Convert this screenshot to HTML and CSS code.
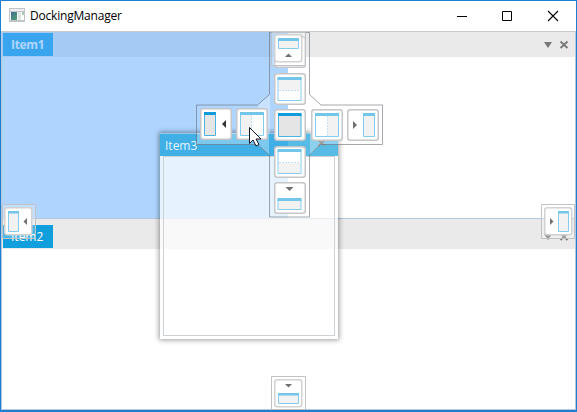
FILE: index.html
```html
<!DOCTYPE html>
<html lang="en">
<head>
<meta charset="utf-8">
<title>DockingManager</title>
<link rel="stylesheet" href="styles.css">
</head>
<body>
<div class="window">
  <header class="titlebar">
    <svg class="app-icon" width="16" height="14" viewBox="0 0 16 14"><defs><linearGradient id="g" x2="1" y2="1"><stop offset="0" stop-color="#3c6c9c"/><stop offset="1" stop-color="#4fa36c"/></linearGradient></defs><path fill="#c2c5c8" d="M0 0h16v14H0z"/><path fill="#eceef0" d="M1 1h14v2H1z"/><path fill="#fff" d="M1 4h14v8H1z"/><path fill="url(#g)" d="M2 4h6v8H2z"/><path fill="#dce8e2" d="M9 4h3v8H9z"/><path fill="#a8cbb8" d="M13 4h2v3h-2z"/></svg>
    <h1 class="title">DockingManager</h1>
    <svg class="captions" width="102" height="12" viewBox="0 0 102 12" fill="none" stroke="#000"><path d="M0 6.500h10M45.500 1.500h9v9h-9z"/><path d="M91 1l10 10M101 1L91 11" stroke-width="1.1"/></svg>
  </header>
  <section class="pane">
    <div class="pane-head"><span class="tab tab-bold">Item1</span>
      <svg class="tools" width="25" height="10" viewBox="0 0 25 10"><path fill="#777" d="M0 2h8L4 8z"/><path d="M16.500 1.500l7 6.500M23.500 1.500L16.500 8" stroke="#777" stroke-width="1.800"/></svg></div>
    <div class="pane-body"></div>
  </section>
  <section class="pane pane-lower">
    <div class="pane-head"><span class="tab">Item2</span>
      <svg class="tools" width="25" height="10" viewBox="0 0 25 10"><path fill="#777" d="M0 2h8L4 8z"/><path d="M16.500 1.500l7 6.500M23.500 1.500L16.500 8" stroke="#777" stroke-width="1.800"/></svg></div>
    <div class="pane-body"></div>
  </section>
</div>
<div class="preview"></div>
<div class="floating">
  <div class="float-head"><span>Item3</span></div>
  <div class="float-body"></div>
</div>
<svg class="guides" width="577" height="412" viewBox="0 0 577 412">
  <defs>
    <g id="btn"><rect x=".75" y=".75" width="30.500" height="30.500" rx="2.500" fill="#fff" stroke="#c6c6c8" stroke-width="1.500"/></g>
    <g id="small"><rect x=".75" y=".75" width="27" height="27" rx="2.500" fill="#fff" stroke="#d2d2d2" stroke-width="1.500"/></g>
  </defs>
  <!-- compass plate -->
  <path class="wedge" d="M270 94.500L258 105v28h12zM309 94.500l12 10.500v28h-12zM197 133h72v22l-12-10.500h-60zM310 133h72v11.500h-61L310 155z"/>
  <path d="M318 140l7 6m0-6l-7 6" stroke="#a89488" stroke-width="1.300"/>
  <path class="outline" d="M269.500 32.500h40v62l11.500 10.500h61.500v39.500H320.500l-11 10.500v62h-40v-62l-12-10.500h-61v-39.500h61l12-10.500z"/>
  <!-- left arm -->
  <use href="#btn" x="200" y="108"/>
  <path class="strong" d="M204.500 113h11v22.500h-11z"/><path class="strong-bar" d="M204 112h12v3h-12z"/><path fill="#333" d="M226 120v8l-4-4z"/>
  <use href="#btn" x="236" y="108"/>
  <path class="soft" d="M240.500 113h23v22.500h-23z"/><path class="half" d="M241 115h11v20h-11z"/><path class="soft-bar" d="M240 112h24v3h-24z"/><path class="dash" d="M251.500 115v20"/>
  <!-- center -->
  <use href="#btn" x="274" y="109"/>
  <path class="strong" d="M278.500 114h22.500v22.500h-22.500z"/><path class="strong-bar" d="M278 113h23.500v3H278z"/>
  <!-- right arm -->
  <use href="#btn" x="311" y="109"/>
  <path class="soft" d="M315.500 114h23v22.500h-23z"/><path class="half" d="M328 116h10v20h-10z"/><path class="soft-bar" d="M315 113h24v3h-24z"/><path class="dash" d="M327.500 116v20"/>
  <use href="#btn" x="347" y="109"/>
  <path class="soft half" d="M363.500 114h11v22.500h-11z"/><path class="soft-bar" d="M363 113h12v3h-12z"/><path class="arrow" d="M353 121v8l4-4z"/>
  <!-- upper arm -->
  <use href="#btn" x="274" y="36"/>
  <use href="#btn" x="274" y="73"/>
  <path class="soft" d="M278 77.500h23v23h-23z"/><path class="half" d="M279 80h21v10h-21z"/><path class="soft-bar" d="M277.500 77h24v3h-24z"/><path class="dash" d="M279 90.500h21"/>
  <!-- lower arm -->
  <use href="#btn" x="274" y="146"/>
  <path class="soft" d="M278 150.500h23v23h-23z"/><path class="half" d="M279 163h21v10h-21z"/><path class="soft-bar" d="M277.500 149h24v3h-24z"/><path class="dash" d="M279 162.500h21"/>
  <use href="#btn" x="274" y="182"/>
  <path class="soft half" d="M278 199.500h23v10h-23z"/><path class="soft-bar" d="M277.500 198h24v3h-24z"/><path class="arrow" d="M285.500 187h8l-4 4z"/>
  <!-- window edge guides -->
  <path class="plate" d="M271.500 32.500h34v33h-34z"/>
  <use href="#small" x="274" y="34"/>
  <path class="soft half" d="M278.500 39.500h20v9h-20z"/><path class="soft-bar" d="M278 38h21v3h-21z"/><path class="arrow" d="M285 57h7l-3.500-3.500z"/>
  <path class="plate" d="M2.500 204.500h33v34h-33z"/>
  <use href="#small" x="4" y="207"/>
  <path class="soft half" d="M8.500 212.500h10v19h-10z"/><path class="soft-bar" d="M8 211h11v2.500H8z"/><path class="arrow" d="M27 218v7l-3.500-3.500z"/>
  <path class="plate" d="M541.500 204.500h33v34h-33z"/>
  <use href="#small" x="544" y="207"/>
  <path class="soft half" d="M558.500 212.500h10v19h-10z"/><path class="soft-bar" d="M558 211h11v2.500h-11z"/><path class="arrow" d="M550 218v7l3.500-3.500z"/>
  <path class="plate" d="M271.500 376.500h34v33h-34z"/>
  <use href="#small" x="274" y="379"/>
  <path class="soft half" d="M278.500 394.500h20v9h-20z"/><path class="soft-bar" d="M278 393h21v2.500h-21z"/><path class="arrow" d="M285 384h7l-3.500 3.500z"/>
  <!-- pointer -->
  <path d="M249.500 127.500v16l3.500-3.500 3 6 3-1.500-3-5.500h5z" fill="#fff" stroke="#151525"/>
</svg>
</body>
</html>
```
FILE: styles.css
```css
* { box-sizing: border-box; }
body {
  margin: 0;
  width: 577px;
  height: 412px;
  overflow: hidden;
  position: relative;
  font: 12px/16px "Open Sans", "Noto Sans", sans-serif;
}
.window {
  height: 412px;
  display: flex;
  flex-direction: column;
  background: #fff;
  border: 1px solid #1b80d2;
  border-bottom-width: 2px;
}
.titlebar {
  height: 31px;
  flex: none;
  display: flex;
  align-items: center;
  padding: 0 17px 2px 8px;
  border-bottom: 1px solid #c8c8c8;
}
.captions { margin-top: 1px; }
.title {
  margin: 2px auto 0 5px;
  font-size: 12px;
  font-weight: 400;
  letter-spacing: -0.2px;
  color: #000;
}
.pane {
  height: 187px;
  flex: none;
  display: flex;
  flex-direction: column;
  border: solid #b5c8df;
  border-width: 0 1px 1px;
}
.pane-lower { height: auto; flex: 1; }
.pane-head {
  height: 25px;
  flex: none;
  display: flex;
  align-items: center;
  justify-content: space-between;
  padding: 0 6px 0 1px;
  background: #eaeaea;
}
.pane-lower .pane-head { height: 30px; align-items: flex-end; padding-bottom: 1px; }
.pane-body { flex: 1; }
.tab {
  width: 50px;
  height: 23px;
  line-height: 24px;
  padding-left: 8px;
  background: #119edc;
  color: #fff;
}
.tab-bold { font-weight: 700; letter-spacing: -0.3px; }
.tools { margin-top: 1px; }
.pane-lower .tools { margin-bottom: 6px; }
.preview {
  position: absolute;
  left: 2px;
  top: 32px;
  width: 286px;
  height: 186px;
  background: rgba(96, 171, 255, 0.5);
}
.floating {
  position: absolute;
  left: 160px;
  top: 133px;
  width: 178px;
  height: 206px;
  display: flex;
  flex-direction: column;
  padding-bottom: 3px;
  background: linear-gradient(transparent 23px, rgba(255, 255, 255, 0.7) 23px);
  box-shadow: 0 0 5px 1px rgba(0, 0, 0, 0.4);
}
.float-head {
  height: 23px;
  flex: none;
  padding: 4px 5px;
  background: rgba(17, 158, 220, 0.7);
  color: #e4f4ff;
  border-top: 1px solid #9ccae6;
}
.float-body { flex: 1; margin: 0 3px; border: 1px solid #cdd2d7; }
.guides { position: absolute; left: 0; top: 0; }
.wedge { fill: rgba(255, 255, 255, 0.32); }
.outline { fill: none; stroke: rgba(105, 110, 118, 0.6); }
.plate { fill: rgba(255, 255, 255, 0.25); stroke: #bfc2c6; }
.soft { fill: #fff; stroke: #85cdee; }
.half { fill: #f2f2f2; }
.soft-bar { fill: #74c5ea; }
.strong { fill: #e5e5e5; stroke: #4ab4e3; }
.strong-bar { fill: #109cdb; }
.dash { stroke: #c6e1f3; stroke-dasharray: 2 1; }
.arrow { fill: #707070; }
```
